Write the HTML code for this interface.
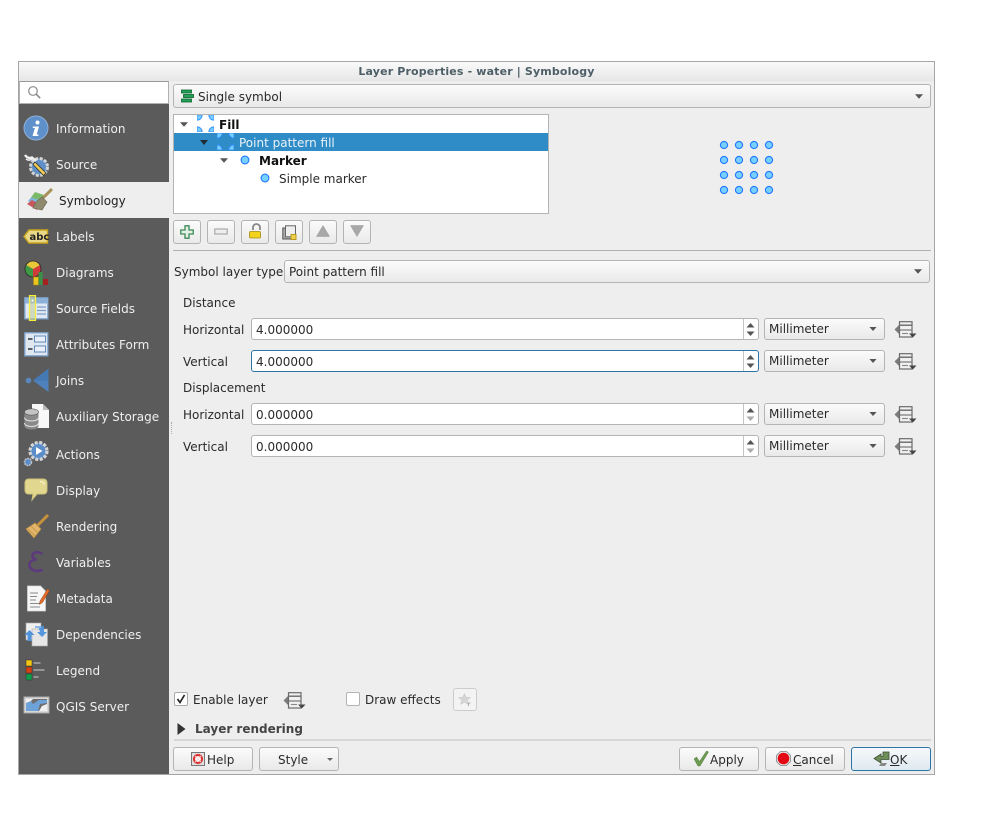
<!DOCTYPE html>
<html><head><meta charset="utf-8"><style>
*{box-sizing:border-box}
html,body{margin:0;padding:0;background:#fff;width:998px;height:835px;overflow:hidden}
body{position:relative;font-family:"DejaVu Sans",sans-serif;font-size:12px;color:#2a2a2a}
.a{position:absolute;white-space:nowrap}
.t{position:absolute;white-space:nowrap;line-height:16px;height:16px}
.side{color:#efefef;left:56px}
.btn{position:absolute;border:1px solid #b4b4b4;border-radius:3px;background:linear-gradient(#fbfbfb,#e9e9e9)}
.input{position:absolute;left:251px;width:508px;height:22px;background:#fff;border:1px solid #b4b4b4;border-radius:3px;padding-left:4px;line-height:22px;color:#2a2a2a}
.spin{position:absolute;left:743px;width:15px;border-left:1px solid #c4c4c4}
.ico{position:absolute}
u{text-decoration:underline}
</style></head><body>
<svg width="0" height="0" style="position:absolute"><defs>
<symbol id="dd" viewBox="0 0 23 18"><path d="M6 3L.5 8.500 6 14z" fill="#7c7c7c"/><rect x="5.500" y=".7" width="12.500" height="15.300" fill="#f0f0f0" stroke="#6a6a6a" stroke-width="1.200"/><path d="M6 4.200h12" stroke="#6a6a6a" stroke-width="1.400"/><path d="M6 9h12" stroke="#777" stroke-width="1.200"/><path d="M8 12.500h6" stroke="#888" stroke-width="1.100"/><path d="M15 12.500h7.500l-3.700 4z" fill="#444"/></symbol>
<symbol id="carrow" viewBox="0 0 9 5"><path d="M0 0h9L4.500 5z" fill="#555"/></symbol>
<symbol id="fillic" viewBox="0 0 18 18"><g fill="#76cfff" stroke="#2f8cff" stroke-width=".9"><path d="M0 0h5.500A5.500 5.500 0 0 1 0 5.500z"/><path d="M18 0h-5.500A5.500 5.500 0 0 0 18 5.500z"/><path d="M0 18h5.500A5.500 5.500 0 0 0 0 12.500z"/><path d="M18 18h-5.500A5.500 5.500 0 0 1 18 12.500z"/></g></symbol>
<symbol id="dot" viewBox="0 0 10 10"><circle cx="5" cy="5" r="3.900" fill="#77d0ff" stroke="#2277ff" stroke-width="1.100"/></symbol>
</defs></svg>

<!-- Window -->
<div class="a" style="left:18px;top:61px;width:917px;height:714px;background:#eeeeee;border:1px solid #a6a6a6"></div>
<div class="a" style="left:19px;top:62px;width:915px;height:19px;background:linear-gradient(#fafafa,#e6e6e6)"></div>
<div class="t" style="left:19px;width:915px;top:64px;text-align:center;font-weight:bold;font-size:11px;color:#4d5f66;letter-spacing:.15px">Layer Properties - water | Symbology</div>

<!-- Sidebar -->
<div class="a" style="left:19px;top:104px;width:150px;height:670px;background:#5b5b5b"></div>
<div class="a" style="left:19px;top:182px;width:150px;height:36px;background:#eeeeee"></div>
<div class="a" style="left:19px;top:81px;width:150px;height:23px;background:#fff;border:1px solid #b0b0b0;border-top-color:#9a9a9a"></div>
<svg class="ico" style="left:27px;top:85px" width="15" height="15" viewBox="0 0 15 15"><circle cx="6" cy="6" r="4.300" fill="none" stroke="#8b8b8b" stroke-width="1.200"/><path d="M9.200 9.200l4 4" stroke="#8b8b8b" stroke-width="1.600"/></svg>

<div class="t side" style="top:121px">Information</div>
<div class="t side" style="top:157px">Source</div>
<div class="t" style="left:59px;top:193px;color:#222">Symbology</div>
<div class="t side" style="top:229px">Labels</div>
<div class="t side" style="top:265px">Diagrams</div>
<div class="t side" style="top:301px">Source Fields</div>
<div class="t side" style="top:337px">Attributes Form</div>
<div class="t side" style="top:373px">Joins</div>
<div class="t side" style="top:409px">Auxiliary Storage</div>
<div class="t side" style="top:447px">Actions</div>
<div class="t side" style="top:483px">Display</div>
<div class="t side" style="top:519px">Rendering</div>
<div class="t side" style="top:555px">Variables</div>
<div class="t side" style="top:591px">Metadata</div>
<div class="t side" style="top:627px">Dependencies</div>
<div class="t side" style="top:663px">Legend</div>
<div class="t side" style="top:699px">QGIS Server</div>

<!-- Information -->
<svg class="ico" style="left:23px;top:115px" width="26" height="26" viewBox="0 0 26 26"><circle cx="13" cy="13" r="12" fill="#5f90ca" stroke="#8fb2dc" stroke-width="1"/><path d="M14.500 5.500a2 2 0 1 1 0 4 2 2 0 0 1 0-4zM10 11.500h6l-2.300 8h2l-.5 1.500H9.500l2.400-8H9.600z" fill="#fff"/></svg>
<!-- Source -->
<svg class="ico" style="left:24px;top:152px" width="26" height="26" viewBox="0 0 26 26"><circle cx="15" cy="15" r="8.500" fill="#5f8fc6" stroke="#d5d5d5" stroke-width="3" stroke-dasharray="3 1.500"/><path d="M1 3c2 3 5 3.500 7 2.500l4 3.500" fill="none" stroke="#f0f0f0" stroke-width="2.400"/><path d="M2 7c2 1.500 4 1.500 6 0" fill="none" stroke="#f0f0f0" stroke-width="1.500"/><path d="M11 10l11 11-2.500 2.500L9 12.500z" fill="#eccb53" stroke="#333" stroke-width=".8"/></svg>
<!-- Symbology -->
<svg class="ico" style="left:26px;top:188px" width="28" height="25" viewBox="0 0 28 25"><path d="M2 13L9 5l9 5-6 9z" fill="#7fb5d8"/><path d="M5 9.500L9 4l9 3-4 5z" fill="#7db96a"/><path d="M1 16l5-4 8 5-3 5z" fill="#c8585e"/><path d="M15 12L26 1" stroke="#a8905a" stroke-width="3"/><path d="M10 14l6-5 5 5-5 8-9-2z" fill="#8f8a6e" stroke="#6d6a55" stroke-width=".7"/></svg>
<!-- Labels -->
<svg class="ico" style="left:23px;top:229px" width="26" height="15" viewBox="0 0 26 15"><path d="M6 1h18.500v13H6L1 7.500z" fill="#e8d98a" stroke="#c9a61a" stroke-width="1.400"/><text x="6.500" y="11" font-family="'DejaVu Sans',sans-serif" font-size="10" font-weight="bold" fill="#222">abc</text></svg>
<!-- Diagrams -->
<svg class="ico" style="left:24px;top:259px" width="25" height="27" viewBox="0 0 25 27"><circle cx="9" cy="10" r="8" fill="#d13a3a"/><path d="M9 10L2 6a8 8 0 0 1 14 0z" fill="#e8c83a"/><path d="M9 10v8a8 8 0 0 1-7-12z" fill="#3f9a45"/><circle cx="9" cy="10" r="8" fill="none" stroke="#2a2a2a" stroke-width=".8"/><rect x="9.500" y="18" width="5" height="8" fill="#eec41e" stroke="#a88812" stroke-width=".6"/><rect x="14.500" y="13" width="4" height="13" fill="#3c8f47"/><rect x="19" y="20" width="5" height="6" fill="#a52020"/></svg>
<!-- Source Fields -->
<svg class="ico" style="left:24px;top:295px" width="25" height="26" viewBox="0 0 25 26"><rect x=".8" y="2.800" width="23" height="21" fill="#dfe8f3" stroke="#7fa4cf" stroke-width="1.300"/><rect x="1.500" y="3.500" width="21.500" height="5" fill="#8db0d8"/><path d="M13 12h9M13 15.500h9M13 19h9" stroke="#7f9dc3" stroke-width="1.200"/><rect x="5.500" y=".5" width="6" height="25" fill="#c5cfa0" fill-opacity=".6" stroke="#f3ee3f" stroke-width="1.300"/><circle cx="8.500" cy="5.500" r="1" fill="#fff"/></svg>
<!-- Attributes Form -->
<svg class="ico" style="left:24px;top:332px" width="25" height="25" viewBox="0 0 25 25"><rect x=".8" y=".8" width="23" height="23" fill="#dfe7f1" stroke="#7fa4cf" stroke-width="1.300"/><rect x="10.500" y="4" width="11" height="6" fill="#e9f0f8" stroke="#5e89bc"/><rect x="10.500" y="14" width="11" height="6" fill="#e9f0f8" stroke="#5e89bc"/><path d="M4 7h4.500M4 17h4.500" stroke="#333" stroke-width="1.500"/></svg>
<!-- Joins -->
<svg class="ico" style="left:23px;top:368px" width="27" height="25" viewBox="0 0 27 25"><circle cx="5.500" cy="12.500" r="2.800" fill="#5b88bc"/><path d="M25.500 .5v23.500L10 12.500z" fill="#4f82bd"/><path d="M25.500 .5v12H10z" fill="#3b6fab" opacity=".5"/></svg>
<!-- Auxiliary Storage -->
<svg class="ico" style="left:23px;top:403px" width="27" height="27" viewBox="0 0 27 27"><path d="M9 1h11l6 6v18H9z" fill="#f8f8f8"/><path d="M20 1v6h6z" fill="#bbb"/><path d="M1.500 9v14c0 2 3 3.500 7 3.500s7-1.500 7-3.500V9z" fill="#8a8a8a"/><ellipse cx="8.500" cy="9" rx="7" ry="3.200" fill="#c4c4c4" stroke="#555" stroke-width=".6"/><path d="M1.500 14.500c0 2 3 3.500 7 3.500s7-1.500 7-3.500M1.500 20c0 2 3 3.500 7 3.500s7-1.500 7-3.500" fill="none" stroke="#e3e3e3" stroke-width="1"/></svg>
<!-- Actions -->
<svg class="ico" style="left:23px;top:440px" width="27" height="27" viewBox="0 0 27 27"><circle cx="15.500" cy="11" r="8.500" fill="#5b8dc8" stroke="#d5d5d5" stroke-width="3.200" stroke-dasharray="3 1.500"/><path d="M13 7l6.500 4-6.500 4z" fill="#fff"/><circle cx="5" cy="22" r="3.500" fill="#5b8dc8" stroke="#c8c8c8" stroke-width="1.500" stroke-dasharray="1.800 .8"/></svg>
<!-- Display -->
<svg class="ico" style="left:24px;top:478px" width="24" height="24" viewBox="0 0 24 24"><path d="M5 1h14c2.500 0 4 1.500 4 4v7c0 2.500-1.500 4-4 4H13l-5 6 1-6H5c-2.500 0-4-1.500-4-4V5c0-2.500 1.500-4 4-4z" fill="#e2d78f" stroke="#cfc27a" stroke-width="1"/><path d="M16 3.500c2 0 4 .5 4.500 3" stroke="#f6f2d2" stroke-width="1.200" fill="none"/></svg>
<!-- Rendering -->
<svg class="ico" style="left:24px;top:513px" width="26" height="26" viewBox="0 0 26 26"><path d="M13 13L24 2" stroke="#c8923c" stroke-width="3"/><path d="M2 16l9-6 6 6-7 9z" fill="#e2b56a" stroke="#b78a40" stroke-width=".7"/><path d="M4 16l7 7M7 13l7 7" stroke="#c39a52" stroke-width="1"/></svg>
<!-- Variables -->
<svg class="ico" style="left:26px;top:550px" width="24" height="24" viewBox="0 0 24 24"><path d="M16 4c-1.500-2-7-2.500-9 0-1.500 2 0 5 3.500 5.500C6 10 3 12 3.500 15.500 4 20.500 12 22.500 16.500 19.500" fill="none" stroke="#5c3a7c" stroke-width="2.600"/></svg>
<!-- Metadata -->
<svg class="ico" style="left:26px;top:585px" width="24" height="27" viewBox="0 0 24 27"><path d="M1.500 1h13l5 5v20h-18z" fill="#f6f6f6" stroke="#d5d5d5" stroke-width=".7"/><path d="M4 8h8M4 11.500h7M4 15h6M4 18.500h10M4 22h10" stroke="#8a8a8a" stroke-width="1"/><path d="M21.500 4l2 1.500-7 12-3 2 .5-3.500z" fill="#e86b2a" stroke="#8e4318" stroke-width=".5"/></svg>
<!-- Dependencies -->
<svg class="ico" style="left:24px;top:622px" width="25" height="25" viewBox="0 0 25 25"><rect x="2" y="1" width="15" height="17" fill="#f0f0f0" stroke="#aaa" stroke-width=".6"/><rect x="8" y="7" width="15.500" height="17" fill="#e6e6e6" stroke="#aaa" stroke-width=".6"/><path d="M.5 13l5-5 5 5H7.500v6H3.500v-6z" fill="#4f94dc"/><path d="M14 4h6v6h3l-5 5-5-5h3z" fill="#4f94dc" opacity=".95"/><path d="M11 5h6" stroke="#8db6e6" stroke-width="2"/></svg>
<!-- Legend -->
<svg class="ico" style="left:25px;top:659px" width="24" height="22" viewBox="0 0 24 22"><rect x="1" y="1" width="6" height="6" fill="#f2c60f" stroke="#333" stroke-width=".5"/><rect x="1" y="8" width="6" height="6" fill="#d84010" stroke="#333" stroke-width=".5"/><rect x="1" y="15" width="6" height="6" fill="#0f9c4a" stroke="#333" stroke-width=".5"/><path d="M8.500 4h7M8.500 11h11M8.500 18h5" stroke="#a8a8a8" stroke-width="1.500"/></svg>
<!-- QGIS Server -->
<svg class="ico" style="left:23px;top:695px" width="27" height="20" viewBox="0 0 27 20"><rect x="1" y="2" width="25" height="16" fill="#d8d8d8" stroke="#aaa" stroke-width="1"/><rect x="3" y="4" width="21" height="12" fill="#6e6e6e"/><path d="M3 16V8l5-2 2 3 6-4 8 0v3l-7 1-2 7z" fill="#6ea3d9"/><path d="M3 4h7l-2 2-5 2zM16 16l3-5 5-2v7z" fill="#f0f0f0"/></svg>

<!-- splitter dots -->
<div class="a" style="left:171px;top:422px;width:1px;height:12px;border-left:1px dotted #aaa"></div>

<!-- Top combo -->
<div class="btn" style="left:173px;top:84px;width:758px;height:24px"></div>
<svg class="ico" style="left:180px;top:89px" width="14" height="14" viewBox="0 0 14 14"><rect x="1.500" y="1" width="10" height="3" fill="#1fa557" stroke="#0c5d2e" stroke-width=".8"/><rect x="3.500" y="5.500" width="10" height="3" fill="#1fa557" stroke="#0c5d2e" stroke-width=".8"/><rect x="1.500" y="10" width="10" height="3" fill="#1fa557" stroke="#0c5d2e" stroke-width=".8"/></svg>
<div class="t" style="left:198px;top:89px">Single symbol</div>
<svg class="ico" style="left:915px;top:94px" width="8" height="5"><use href="#carrow"/></svg>

<!-- Tree -->
<div class="a" style="left:173px;top:114px;width:376px;height:100px;background:#fff;border:1px solid #b4b4b4"></div>
<div class="a" style="left:174px;top:133px;width:374px;height:18px;background:#308cc6"></div>
<svg class="ico" style="left:180px;top:122px" width="8" height="5"><use href="#carrow"/></svg>
<svg class="ico" style="left:197px;top:115px" width="17" height="17"><use href="#fillic"/></svg>
<div class="t" style="left:219px;top:117px;font-weight:bold;color:#111">Fill</div>
<svg class="ico" style="left:200px;top:140px" width="8" height="5"><path d="M0 0h8L4 5z" fill="#1f2a35"/></svg>
<svg class="ico" style="left:217px;top:133px" width="17" height="17"><use href="#fillic"/></svg>
<div class="t" style="left:239px;top:135px;color:#e9f3fa">Point pattern fill</div>
<svg class="ico" style="left:220px;top:158px" width="8" height="5"><use href="#carrow"/></svg>
<svg class="ico" style="left:240px;top:155px" width="10" height="10"><use href="#dot"/></svg>
<div class="t" style="left:259px;top:153px;font-weight:bold;color:#111">Marker</div>
<svg class="ico" style="left:260px;top:173px" width="10" height="10"><use href="#dot"/></svg>
<div class="t" style="left:279px;top:171px">Simple marker</div>

<!-- Preview dots -->
<svg class="ico" style="left:715px;top:140px" width="64" height="56" viewBox="0 0 64 56">
<g fill="#77d0ff" stroke="#2277ff" stroke-width="1.100">
<circle cx="9" cy="5" r="3.600"/><circle cx="24" cy="5" r="3.600"/><circle cx="39" cy="5" r="3.600"/><circle cx="54" cy="5" r="3.600"/>
<circle cx="9" cy="20" r="3.600"/><circle cx="24" cy="20" r="3.600"/><circle cx="39" cy="20" r="3.600"/><circle cx="54" cy="20" r="3.600"/>
<circle cx="9" cy="35" r="3.600"/><circle cx="24" cy="35" r="3.600"/><circle cx="39" cy="35" r="3.600"/><circle cx="54" cy="35" r="3.600"/>
<circle cx="9" cy="50" r="3.600"/><circle cx="24" cy="50" r="3.600"/><circle cx="39" cy="50" r="3.600"/><circle cx="54" cy="50" r="3.600"/>
</g></svg>

<!-- tool buttons -->
<div class="btn" style="left:173px;top:220px;width:28px;height:24px"></div>
<div class="btn" style="left:207px;top:220px;width:28px;height:24px"></div>
<div class="btn" style="left:241px;top:220px;width:28px;height:24px"></div>
<div class="btn" style="left:275px;top:220px;width:28px;height:24px"></div>
<div class="btn" style="left:309px;top:220px;width:28px;height:24px"></div>
<div class="btn" style="left:343px;top:220px;width:28px;height:24px"></div>
<svg class="ico" style="left:180px;top:225px" width="14" height="14" viewBox="0 0 14 14"><path d="M5 .8h4v4.200h4.200v4H9v4.200H5V9H.8V5H5z" fill="#e4f0e4" stroke="#3a8a58" stroke-width="1.300"/></svg>
<svg class="ico" style="left:214px;top:228px" width="14" height="8" viewBox="0 0 14 8"><rect x=".8" y="1" width="12.400" height="5" fill="#eee" stroke="#aaa" stroke-width="1.200"/></svg>
<svg class="ico" style="left:248px;top:223px" width="15" height="17" viewBox="0 0 15 17"><path d="M5 7V4.500a3.500 3.500 0 0 1 7 0V7" fill="none" stroke="#888" stroke-width="1.800"/><rect x="1.500" y="8.500" width="11" height="6.500" rx="1" fill="#f3d21e" stroke="#a38a10" stroke-width=".8"/></svg>
<svg class="ico" style="left:282px;top:225px" width="15" height="15" viewBox="0 0 15 15"><rect x=".8" y="3" width="10" height="11" fill="#aaa" stroke="#555" stroke-width="1"/><rect x="3.500" y=".8" width="10" height="11" fill="#eee" stroke="#666" stroke-width="1"/><rect x="9" y="9.500" width="5" height="5" fill="#f0d24a" stroke="#b59a1e" stroke-width="1"/></svg>
<svg class="ico" style="left:316px;top:225px" width="14" height="12" viewBox="0 0 14 12"><path d="M7 .5l6.500 11H.5z" fill="#a8a8a8" stroke="#999" stroke-width=".5"/></svg>
<svg class="ico" style="left:350px;top:225px" width="14" height="12" viewBox="0 0 14 12"><path d="M7 11.500L.5 .5h13z" fill="#a8a8a8" stroke="#999" stroke-width=".5"/></svg>

<div class="a" style="left:173px;top:250px;width:758px;height:1px;background:#b0b0b0"></div>

<!-- Symbol layer type -->
<div class="t" style="left:174px;top:264px">Symbol layer type</div>
<div class="btn" style="left:284px;top:260px;width:646px;height:23px"></div>
<div class="t" style="left:289px;top:264px">Point pattern fill</div>
<svg class="ico" style="left:914px;top:269px" width="8" height="5"><use href="#carrow"/></svg>

<div class="t" style="left:183px;top:295px">Distance</div>
<div class="t" style="left:183px;top:322px">Horizontal</div>
<div class="t" style="left:183px;top:354px">Vertical</div>
<div class="t" style="left:183px;top:380px">Displacement</div>
<div class="t" style="left:183px;top:407px">Horizontal</div>
<div class="t" style="left:183px;top:439px">Vertical</div>

<div class="input" style="top:318px">4.000000</div>
<div class="input" style="top:350px;border-color:#2a76a8">4.000000</div>
<div class="input" style="top:403px">0.000000</div>
<div class="input" style="top:435px">0.000000</div>

<div class="spin" style="top:319px;height:20px"></div>
<div class="spin" style="top:351px;height:20px"></div>
<div class="spin" style="top:404px;height:20px"></div>
<div class="spin" style="top:436px;height:20px"></div>
<svg class="ico" style="left:746px;top:323px" width="9" height="13"><path d="M.5 4.500h8L4.500 0zM.5 8.500h8L4.500 13z" fill="#555"/></svg>
<svg class="ico" style="left:746px;top:355px" width="9" height="13"><path d="M.5 4.500h8L4.500 0zM.5 8.500h8L4.500 13z" fill="#555"/></svg>
<svg class="ico" style="left:746px;top:408px" width="9" height="13"><path d="M.5 4.500h8L4.500 0z" fill="#555"/><path d="M.5 8.500h8L4.500 13z" fill="#aaa"/></svg>
<svg class="ico" style="left:746px;top:440px" width="9" height="13"><path d="M.5 4.500h8L4.500 0z" fill="#555"/><path d="M.5 8.500h8L4.500 13z" fill="#aaa"/></svg>

<div class="btn" style="left:764px;top:318px;width:121px;height:22px"></div>
<div class="btn" style="left:764px;top:350px;width:121px;height:22px"></div>
<div class="btn" style="left:764px;top:403px;width:121px;height:22px"></div>
<div class="btn" style="left:764px;top:435px;width:121px;height:22px"></div>
<div class="t" style="left:769px;top:321px">Millimeter</div>
<div class="t" style="left:769px;top:353px">Millimeter</div>
<div class="t" style="left:769px;top:406px">Millimeter</div>
<div class="t" style="left:769px;top:438px">Millimeter</div>
<svg class="ico" style="left:869px;top:327px" width="8" height="4"><use href="#carrow"/></svg>
<svg class="ico" style="left:869px;top:359px" width="8" height="4"><use href="#carrow"/></svg>
<svg class="ico" style="left:869px;top:412px" width="8" height="4"><use href="#carrow"/></svg>
<svg class="ico" style="left:869px;top:444px" width="8" height="4"><use href="#carrow"/></svg>
<svg class="ico" style="left:894px;top:321px" width="23" height="18"><use href="#dd"/></svg>
<svg class="ico" style="left:894px;top:353px" width="23" height="18"><use href="#dd"/></svg>
<svg class="ico" style="left:894px;top:406px" width="23" height="18"><use href="#dd"/></svg>
<svg class="ico" style="left:894px;top:438px" width="23" height="18"><use href="#dd"/></svg>

<!-- Enable layer row -->
<div class="a" style="left:174px;top:692px;width:14px;height:14px;background:#fff;border:1px solid #aaa;border-radius:2px"></div>
<svg class="ico" style="left:175px;top:693px" width="12" height="12" viewBox="0 0 12 12"><path d="M2.500 6l2.500 3.500L9.500 2" fill="none" stroke="#222" stroke-width="1.700"/></svg>
<div class="t" style="left:193px;top:692px">Enable layer</div>
<svg class="ico" style="left:283px;top:692px" width="23" height="18"><use href="#dd"/></svg>
<div class="a" style="left:346px;top:692px;width:14px;height:14px;background:#fff;border:1px solid #b4b4b4;border-radius:2px"></div>
<div class="t" style="left:365px;top:692px">Draw effects</div>
<div class="btn" style="left:453px;top:688px;width:24px;height:23px;background:#f3f3f3;border-color:#cccccc"></div>
<svg class="ico" style="left:458px;top:693px" width="14" height="14" viewBox="0 0 14 14"><path d="M6.500 .5l1.800 4h4.200l-3.300 2.800 1.200 4.200-3.900-2.400-3.900 2.400 1.200-4.200L.5 4.500h4.200z" fill="#d6d6d6" stroke="#c0c0c0" stroke-width=".5"/><path d="M10.500 13v-3h2" fill="none" stroke="#aaa" stroke-width="1"/></svg>

<!-- Layer rendering -->
<svg class="ico" style="left:177px;top:723px" width="9" height="12"><path d="M.5 0l8 6-8 6z" fill="#333"/></svg>
<div class="t" style="left:195px;top:721px;font-weight:bold;color:#444">Layer rendering</div>
<div class="a" style="left:174px;top:739px;width:757px;height:2px;background:#d6d6d6"></div>

<!-- Bottom buttons -->
<div class="btn" style="left:173px;top:747px;width:80px;height:24px"></div>
<svg class="ico" style="left:191px;top:752px" width="14" height="14" viewBox="0 0 14 14"><rect x=".5" y=".5" width="13" height="13" fill="#e0e0e0" stroke="#777"/><circle cx="7" cy="7" r="4" fill="#fff" stroke="#d33" stroke-width="2.200"/><path d="M4 4l6 6M10 4l-6 6" stroke="#f3dcdc" stroke-width="1"/></svg>
<div class="t" style="left:207px;top:752px">Help</div>
<div class="btn" style="left:259px;top:747px;width:80px;height:24px"></div>
<div class="t" style="left:278px;top:752px">Style</div>
<svg class="ico" style="left:327px;top:758px" width="6" height="3"><path d="M0 0h6L3 3z" fill="#666"/></svg>

<div class="btn" style="left:679px;top:747px;width:80px;height:24px"></div>
<svg class="ico" style="left:693px;top:750px" width="16" height="17" viewBox="0 0 16 17"><path d="M1 9l2.500-2 3 4.500L13.500 1 15.500 2 7 16H5z" fill="#6d9b52" stroke="#4e7a3a" stroke-width=".5"/></svg>
<div class="t" style="left:710px;top:752px">Apply</div>
<div class="btn" style="left:765px;top:747px;width:80px;height:24px"></div>
<svg class="ico" style="left:776px;top:751px" width="15" height="15" viewBox="0 0 15 15"><path d="M4.500 .5h6l4 4v6l-4 4h-6l-4-4v-6z" fill="#e6e6e6" stroke="#999"/><circle cx="7.500" cy="7.500" r="5.800" fill="#e30613"/></svg>
<div class="t" style="left:793px;top:752px"><u>C</u>ancel</div>
<div class="btn" style="left:851px;top:747px;width:80px;height:24px;border-color:#2a76a8;background:linear-gradient(#f6f9fb,#dfe9f0)"></div>
<svg class="ico" style="left:873px;top:751px" width="17" height="16" viewBox="0 0 17 16"><path d="M10 1h6v7.500h-8V12L1 7.500 8 3v2.500h2z" fill="#6f8f5a" stroke="#3e4e34" stroke-width=".8"/><path d="M8 12l-2 3h6l2-3z" fill="#888"/></svg>
<div class="t" style="left:890px;top:752px"><u>O</u>K</div>
</body></html>
